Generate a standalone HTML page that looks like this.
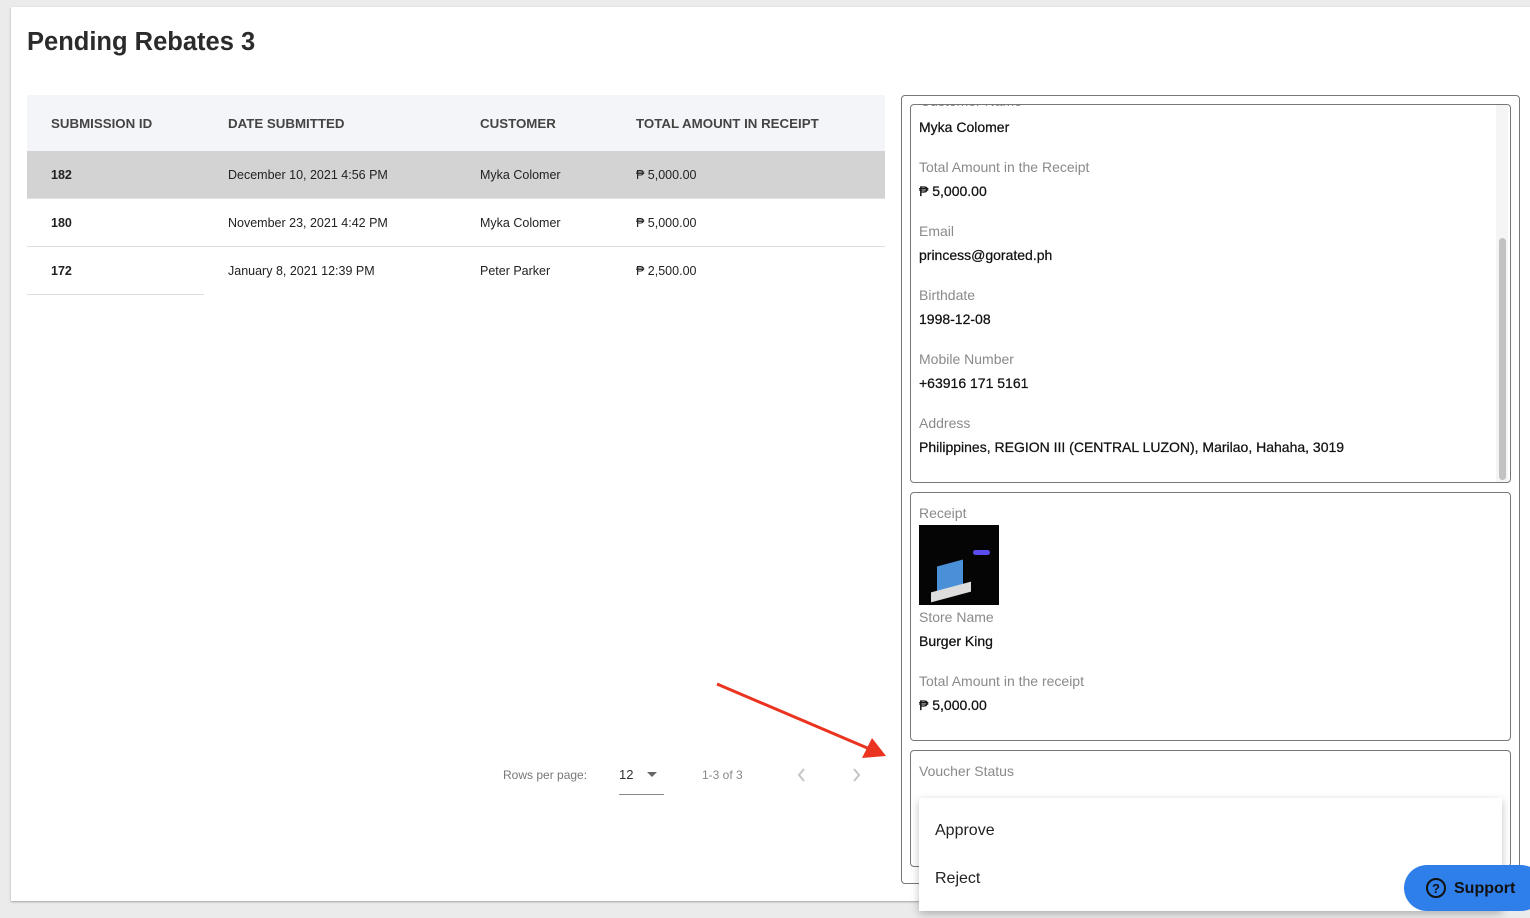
<!DOCTYPE html>
<html><head><meta charset="utf-8"><style>
*{box-sizing:border-box;margin:0;padding:0}
body{width:1530px;height:918px;overflow:hidden;background:#ebebeb;font-family:"Liberation Sans",Arial,sans-serif;position:relative}
.card{position:absolute;left:11px;top:7px;width:1530px;height:894px;background:#fff;box-shadow:0 1px 2px rgba(0,0,0,.3)}
h1{position:absolute;left:27px;top:28px;font-size:25.5px;font-weight:bold;color:#2b2b2b}
.a{position:absolute}
.th{font-size:13.3px;font-weight:bold;color:#444;top:116px}
.td{font-size:12.5px;color:#222}
.lbl{font-size:14px;color:#8a8a8a;position:absolute;left:919px}
.val{font-size:14px;color:#111;position:absolute;left:919px;-webkit-text-stroke:0.25px #111}
.box{position:absolute;border:1px solid #777;border-radius:4px}
</style></head><body>
<div class="card"></div>
<h1>Pending Rebates 3</h1>
<div class="a" style="left:27px;top:95px;width:858px;height:56px;background:#f4f5f9"></div>
<div class="a th" style="left:51px">SUBMISSION ID</div>
<div class="a th" style="left:228px">DATE SUBMITTED</div>
<div class="a th" style="left:480px">CUSTOMER</div>
<div class="a th" style="left:636px">TOTAL AMOUNT IN RECEIPT</div>
<div class="a" style="left:27px;top:151px;width:858px;height:48px;background:#d3d3d3;border-bottom:1px solid #e0e0e0"></div>
<div class="a" style="left:27px;top:199px;width:858px;height:48px;border-bottom:1px solid #ddd"></div>
<div class="a" style="left:27px;top:247px;width:177px;height:48px;border-bottom:1px solid #ddd"></div>
<div class="a td" style="left:51px;top:168px;font-weight:bold">182</div>
<div class="a td" style="left:228px;top:168px">December 10, 2021 4:56 PM</div>
<div class="a td" style="left:480px;top:168px">Myka Colomer</div>
<div class="a td" style="left:636px;top:168px">₱ 5,000.00</div>
<div class="a td" style="left:51px;top:216px;font-weight:bold">180</div>
<div class="a td" style="left:228px;top:216px">November 23, 2021 4:42 PM</div>
<div class="a td" style="left:480px;top:216px">Myka Colomer</div>
<div class="a td" style="left:636px;top:216px">₱ 5,000.00</div>
<div class="a td" style="left:51px;top:264px;font-weight:bold">172</div>
<div class="a td" style="left:228px;top:264px">January 8, 2021 12:39 PM</div>
<div class="a td" style="left:480px;top:264px">Peter Parker</div>
<div class="a td" style="left:636px;top:264px">₱ 2,500.00</div>
<div class="a" style="left:503px;top:768px;font-size:12px;color:#777">Rows per page:</div>
<div class="a" style="left:619px;top:767px;font-size:13px;color:#333">12</div>
<div class="a" style="left:647px;top:772px;border:5px solid transparent;border-top:5px solid #666"></div>
<div class="a" style="left:619px;top:794px;width:45px;border-top:1px solid #888"></div>
<div class="a" style="left:702px;top:768px;font-size:12px;color:#888">1-3 of 3</div>
<svg class="a" style="left:790px;top:765px" width="80" height="20"><path d="M14 4l-5 6 5 6M64 4l5 6-5 6" stroke="#c5c5c5" stroke-width="2" fill="none"/></svg>
<svg class="a" style="left:700px;top:670px" width="200" height="100"><line x1="17" y1="14" x2="172" y2="80" stroke="#ea3420" stroke-width="3"/><polygon points="186,86 162,88 172,68" fill="#ea3420"/></svg>
<div class="box" style="left:901px;top:95px;width:619px;height:789px"></div>
<div class="box" style="left:910px;top:104px;width:601px;height:379px;overflow:hidden">
<div class="a" style="right:2px;top:0;width:12px;height:377px;background:#f5f5f5"></div>
<div class="a" style="right:4px;top:133px;width:7px;height:242px;background:#c2c2c2;border-radius:4px"></div>
<div class="a" style="left:9px;top:-12px;font-size:14px;color:#8a8a8a">Customer Name</div>
</div>
<div class="val" style="top:119px">Myka Colomer</div>
<div class="lbl" style="top:159px">Total Amount in the Receipt</div>
<div class="val" style="top:183px">₱ 5,000.00</div>
<div class="lbl" style="top:223px">Email</div>
<div class="val" style="top:247px">princess@gorated.ph</div>
<div class="lbl" style="top:287px">Birthdate</div>
<div class="val" style="top:311px">1998-12-08</div>
<div class="lbl" style="top:351px">Mobile Number</div>
<div class="val" style="top:375px">+63916 171 5161</div>
<div class="lbl" style="top:415px">Address</div>
<div class="val" style="top:439px">Philippines, REGION III (CENTRAL LUZON), Marilao, Hahaha, 3019</div>
<div class="box" style="left:910px;top:492px;width:601px;height:249px"></div>
<div class="lbl" style="top:505px">Receipt</div>
<div class="a" style="left:919px;top:525px;width:80px;height:80px;background:#050505">
<div class="a" style="left:54px;top:25px;width:17px;height:5px;background:#5b4cf0;border-radius:3px"></div>
<div class="a" style="left:18px;top:38px;width:26px;height:30px;background:#4a90d9;transform:skewY(-15deg)"></div>
<div class="a" style="left:12px;top:62px;width:40px;height:10px;background:#ddd;transform:skewY(-15deg)"></div>
</div>
<div class="lbl" style="top:609px">Store Name</div>
<div class="val" style="top:633px">Burger King</div>
<div class="lbl" style="top:673px">Total Amount in the receipt</div>
<div class="val" style="top:697px">₱ 5,000.00</div>
<div class="box" style="left:910px;top:750px;width:601px;height:117px"></div>
<div class="lbl" style="top:763px">Voucher Status</div>
<div class="a" style="left:919px;top:798px;width:583px;height:113px;background:#fff;box-shadow:0 3px 8px rgba(0,0,0,.25)">
<div class="a" style="left:16px;top:24px;font-size:16px;color:#222">Approve</div>
<div class="a" style="left:16px;top:72px;font-size:16px;color:#222">Reject</div>
</div>
<div class="a" style="left:1404px;top:865px;width:140px;height:46px;background:#2f7fea;border-radius:23px">
<svg class="a" style="left:21px;top:12px" width="22" height="22"><circle cx="11" cy="11" r="9" stroke="#111" stroke-width="2" fill="none"/><text x="11" y="16" text-anchor="middle" font-size="13" font-weight="bold" font-family="Liberation Sans" fill="#111">?</text></svg>
<div class="a" style="left:50px;top:15px;font-size:16px;font-weight:bold;color:#111">Support</div>
</div>
</body></html>
